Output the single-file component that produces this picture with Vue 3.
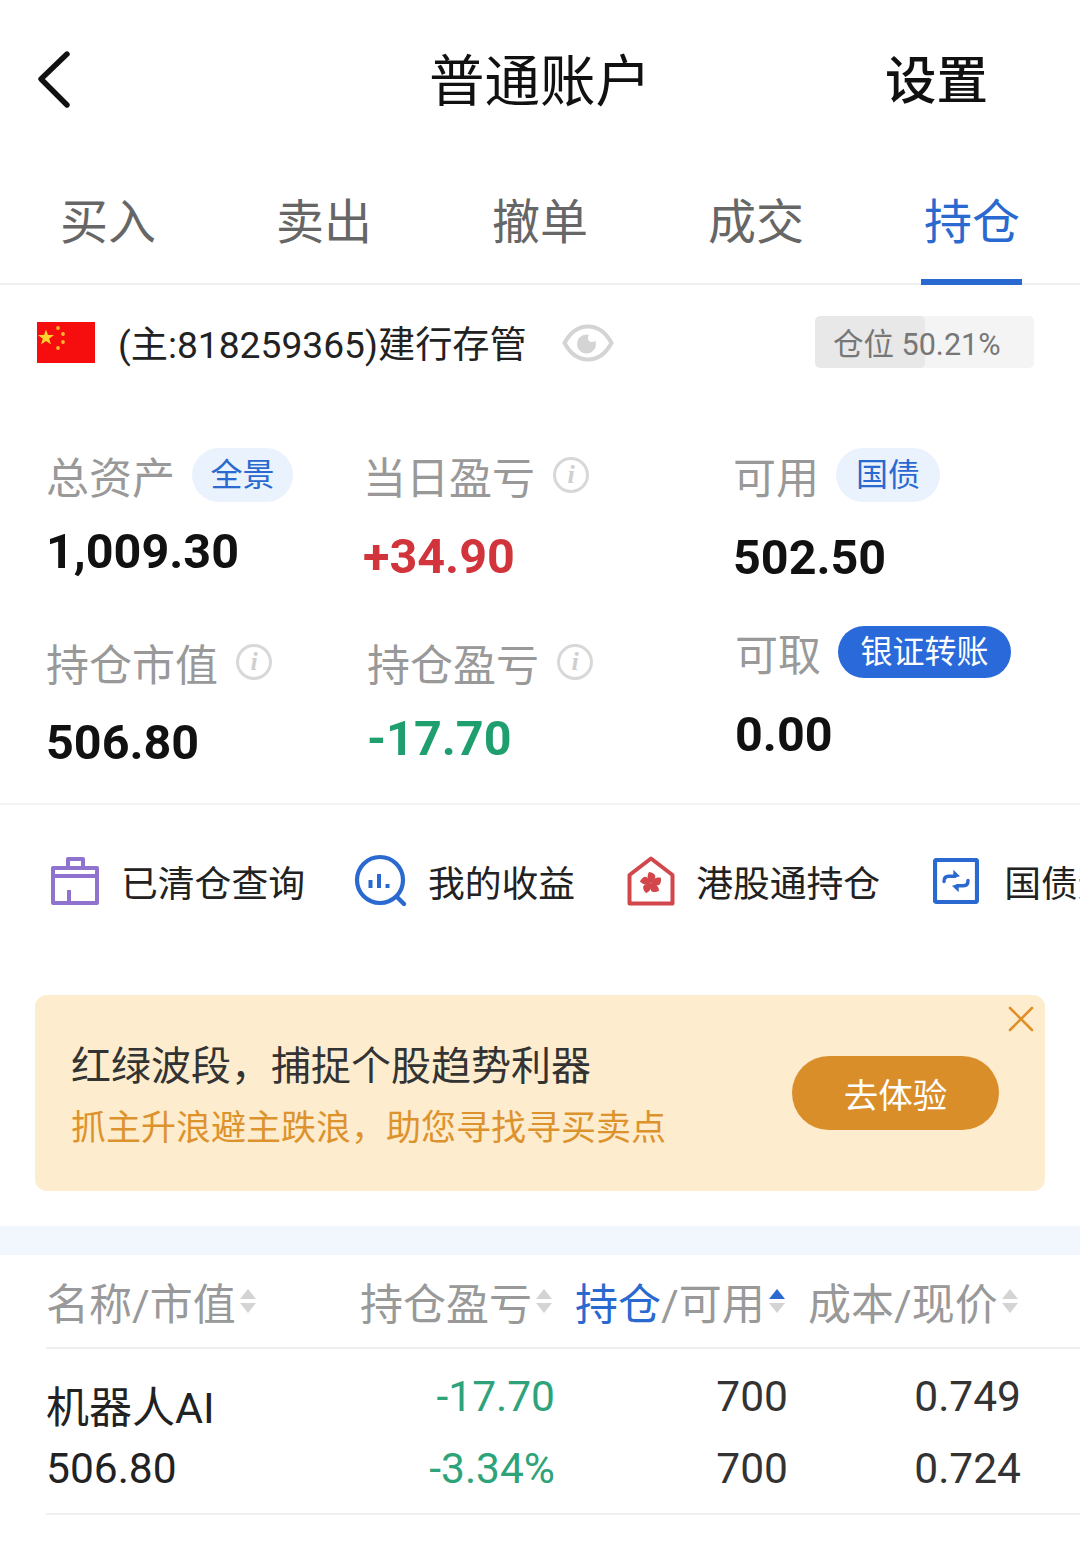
<script setup>
const tabs = ['买入', '卖出', '撤单', '成交', '持仓']

const columns = [
  { key: 'name', label: '名称/市值' },
  { key: 'profit', label: '持仓盈亏' },
  { key: 'hold', active: '持仓', label: '/可用', sorted: true },
  { key: 'cost', label: '成本/现价' }
]

const petal = 'M24 27 C20.5 24.5 19.5 20 22 16 C26 16.5 29.5 19 28 22 C27 24 25.5 25 24 27 Z'
</script>

<template>
  <div class="page">
    <header class="topbar">
      <svg class="back" width="36" height="60" viewBox="0 0 36 60">
        <path d="M31 4 L5 29 L31 55" fill="none" stroke="#111" stroke-width="5.4" stroke-linecap="round" stroke-linejoin="round" />
      </svg>
      <h1 class="title">普通账户</h1>
      <span class="setting">设置</span>
    </header>

    <nav class="tabs">
      <div v-for="(tab, i) in tabs" :key="tab" class="tab" :class="{ active: i === 4 }">{{ tab }}</div>
    </nav>

    <section class="account">
      <svg class="flag" width="58" height="41" viewBox="0 0 58 41">
        <rect width="58" height="41" fill="#f60d0d" />
        <polygon points="9,7.5 11,13 17,13 12.2,16.8 14,22.5 9,19 4,22.5 5.8,16.8 1,13 7,13" fill="#fbd22e" />
        <circle cx="21" cy="6" r="1.9" fill="#f9b62a" />
        <circle cx="26" cy="12" r="1.9" fill="#f9b62a" />
        <circle cx="26" cy="20" r="1.9" fill="#f9b62a" />
        <circle cx="21" cy="26" r="1.9" fill="#f9b62a" />
      </svg>
      <span class="account-name">(主:818259365)建行存管</span>
      <svg class="eye" width="52" height="38" viewBox="0 0 52 38">
        <path d="M2.5 19 C9 7 17 2.5 26 2.5 C35 2.5 43 7 49.5 19 C43 31 35 35.5 26 35.5 C17 35.5 9 31 2.5 19 Z" fill="none" stroke="#d4d4d4" stroke-width="4" />
        <circle cx="24.5" cy="20" r="9.5" fill="#d4d4d4" />
        <circle cx="30" cy="14" r="4" fill="#fff" />
      </svg>
      <div class="position">
        <div class="position-fill"></div>
        <span class="position-text">仓位 50.21%</span>
      </div>
    </section>

    <section class="stats">
      <div class="stat s-assets">
        <div class="stat-label">总资产<span class="pill">全景</span></div>
        <div class="stat-value">1,009.30</div>
      </div>
      <div class="stat s-today">
        <div class="stat-label">当日盈亏<i class="info">i</i></div>
        <div class="stat-value up">+34.90</div>
      </div>
      <div class="stat s-avail">
        <div class="stat-label">可用<span class="pill">国债</span></div>
        <div class="stat-value">502.50</div>
      </div>
      <div class="stat s-market">
        <div class="stat-label">持仓市值<i class="info">i</i></div>
        <div class="stat-value">506.80</div>
      </div>
      <div class="stat s-hold">
        <div class="stat-label">持仓盈亏<i class="info">i</i></div>
        <div class="stat-value down">-17.70</div>
      </div>
      <div class="stat s-draw">
        <div class="stat-label">可取<span class="pill solid">银证转账</span></div>
        <div class="stat-value">0.00</div>
      </div>
    </section>

    <section class="actions">
      <div class="action a-clear">
        <svg width="50" height="50" viewBox="0 0 50 50" fill="none" stroke="#9072cf" stroke-width="4" stroke-linejoin="round">
          <path d="M3 12 H47 V47 H3 Z" />
          <path d="M18 12 V3 H33 V12" />
          <path d="M3 20 H47" />
          <path d="M19 34 V47" />
        </svg>
        <span>已清仓查询</span>
      </div>
      <div class="action a-income">
        <svg width="54" height="54" viewBox="0 0 54 54" fill="none">
          <circle cx="26" cy="26" r="23" stroke="#2a69cf" stroke-width="4.2" />
          <path d="M43 43 L50 50" stroke="#2a69cf" stroke-width="4.4" stroke-linecap="round" />
          <path d="M16.5 26 V34 M25 20 V34 M33.5 30 V34" stroke="#2a69cf" stroke-width="4" />
        </svg>
        <span>我的收益</span>
      </div>
      <div class="action a-hk">
        <svg width="48" height="50" viewBox="0 0 48 50" fill="none">
          <path d="M2.5 19 L24 2.5 L45.5 19 V47.5 H2.5 Z" stroke="#d2474c" stroke-width="4" stroke-linejoin="round" />
          <g fill="#d2474c">
            <path :d="petal" />
            <path :d="petal" transform="rotate(72 24 27)" />
            <path :d="petal" transform="rotate(144 24 27)" />
            <path :d="petal" transform="rotate(216 24 27)" />
            <path :d="petal" transform="rotate(288 24 27)" />
          </g>
        </svg>
        <span>港股通持仓</span>
      </div>
      <div class="action a-bond">
        <svg width="46" height="46" viewBox="0 0 46 46" fill="none" stroke="#2a69cf">
          <rect x="2" y="2" width="42" height="42" rx="1.5" stroke-width="4.2" />
          <path d="M11 23.5 C11 20 13 18.3 15.5 18.3 H22" stroke-width="3.4" stroke-linecap="round" />
          <path d="M35 22.5 C35 26 33 27.7 30.5 27.7 H24" stroke-width="3.4" stroke-linecap="round" />
          <path d="M20.3 11.7 L27 18.3 L20.3 20 Z" fill="#2a69cf" stroke="none" />
          <path d="M25.7 34.3 L19 27.7 L25.7 26 Z" fill="#2a69cf" stroke="none" />
        </svg>
        <span>国债逆回购</span>
      </div>
    </section>

    <section class="banner">
      <div class="banner-text">
        <div class="banner-title">红绿波段，捕捉个股趋势利器</div>
        <div class="banner-sub">抓主升浪避主跌浪，助您寻找寻买卖点</div>
      </div>
      <button class="banner-btn">去体验</button>
      <svg class="banner-close" width="26" height="26" viewBox="0 0 26 26">
        <path d="M2 2 L24 24 M24 2 L2 24" stroke="#df9029" stroke-width="2.6" stroke-linecap="round" />
      </svg>
    </section>

    <div class="divider"></div>

    <section class="table">
      <div class="thead">
        <div v-for="col in columns" :key="col.key" class="th" :class="'col-' + col.key">
          <span v-if="col.active" class="th-active">{{ col.active }}</span>{{ col.label }}
          <span class="sort">
            <em class="tri-up" :class="{ on: col.sorted }"></em>
            <em class="tri-down"></em>
          </span>
        </div>
      </div>
      <div class="tr">
        <div class="td-name">
          <div class="stock-name">机器人AI</div>
          <div class="stock-value">506.80</div>
        </div>
        <div class="td td-profit">
          <div>-17.70</div>
          <div>-3.34%</div>
        </div>
        <div class="td td-hold">
          <div>700</div>
          <div>700</div>
        </div>
        <div class="td td-cost">
          <div>0.749</div>
          <div>0.724</div>
        </div>
      </div>
    </section>
  </div>
</template>

<style scoped>
.page {
  width: 1080px;
  height: 1566px;
  overflow: hidden;
  background: #fff;
  color: #111;
  font-family: Roboto, "Noto Sans CJK SC", sans-serif;
}

/* top bar */
.topbar {
  height: 160px;
  display: flex;
  align-items: center;
  position: relative;
}

.back {
  margin-left: 36px;
}

.title {
  position: absolute;
  left: 0;
  right: 0;
  top: 52px;
  margin: 0;
  text-align: center;
  font-size: 55.5px;
  line-height: 62px;
  font-weight: 400;
}

.setting {
  margin-left: auto;
  margin-right: 92px;
  margin-top: 4px;
  font-size: 51.5px;
  line-height: 60px;
  font-weight: 500;
}

/* tabs */
.tabs {
  height: 125px;
  display: grid;
  grid-template-columns: repeat(5, 1fr);
  border-bottom: 2px solid #eef0f2;
  box-sizing: border-box;
}

.tab {
  position: relative;
  text-align: center;
  font-size: 48px;
  line-height: 126px;
  color: #666;
}

.tab.active {
  color: #2a69cf;
}

.tab.active::after {
  content: '';
  position: absolute;
  left: 57px;
  right: 58px;
  bottom: 1px;
  height: 6px;
  background: #2a69cf;
}

/* account row */
.account {
  height: 118px;
  padding: 0 46px 0 37px;
  display: flex;
  align-items: center;
}

.flag {
  margin-bottom: 3px;
}

.account-name {
  margin-left: 23px;
  margin-top: 2px;
  font-size: 37.2px;
  line-height: 50px;
  color: #222;
}

.eye {
  margin-left: 35px;
  margin-bottom: 2px;
}

.position {
  position: relative;
  margin-left: auto;
  margin-bottom: 4px;
  width: 219px;
  height: 52px;
  border-radius: 5px;
  background: #f4f4f4;
  overflow: hidden;
}

.position-fill {
  position: absolute;
  left: 0;
  top: 0;
  bottom: 0;
  width: 110px;
  border-radius: 5px;
  background: #e8e8e8;
}

.position-text {
  position: absolute;
  left: 18px;
  top: 7px;
  font-size: 30.5px;
  line-height: 44px;
  color: #777;
  white-space: nowrap;
}

/* stats */
.stats {
  height: 402px;
  padding-left: 46px;
  display: grid;
  grid-template-columns: 317px 370px 1fr;
  grid-template-rows: 187px 1fr;
  border-bottom: 2px solid #f3f4f5;
  box-sizing: border-box;
}

.stat-label {
  display: flex;
  align-items: center;
  height: 60px;
  font-size: 43px;
  color: #999;
}

.stat-value {
  font-size: 48.5px;
  line-height: 60px;
  font-weight: 700;
  color: #111;
}

.stat-value.up {
  color: #d2343c;
}

.stat-value.down {
  color: #1f9e6e;
}

.s-assets,
.s-today,
.s-avail {
  padding-top: 42px;
}

.s-assets .stat-value {
  margin-top: 17px;
}

.s-today .stat-value {
  margin-top: 22px;
}

.s-avail .stat-value {
  margin-top: 23px;
}

.s-market,
.s-hold {
  padding-top: 42px;
}

.s-market .stat-value {
  margin-top: 21px;
}

.s-hold {
  margin-left: 4px;
}

.s-hold .stat-value {
  margin-top: 17px;
}

.s-draw {
  margin-left: 2px;
  padding-top: 32px;
}

.s-draw .stat-value {
  margin-top: 23px;
}

.pill {
  margin-left: 17px;
  height: 54px;
  padding: 0 18.5px;
  border-radius: 27px;
  background: #eaf2fd;
  color: #2a69cf;
  font-size: 32px;
  line-height: 54px;
}

.s-avail .pill {
  padding: 0 20px;
}

.pill.solid {
  height: 52px;
  line-height: 52px;
  padding: 0 22.5px;
  background: #2a69d9;
  color: #fff;
}

.info {
  margin-left: 18px;
  width: 30px;
  height: 30px;
  border: 3px solid #d8d8d8;
  border-radius: 50%;
  display: flex;
  align-items: center;
  justify-content: center;
  font-family: "Liberation Serif", serif;
  font-size: 26px;
  font-weight: 700;
  font-style: italic;
  color: #cfcfcf;
}

/* shortcut row */
.actions {
  height: 190px;
  padding-bottom: 38px;
  box-sizing: border-box;
  display: flex;
  align-items: center;
  overflow: hidden;
  white-space: nowrap;
  font-size: 36.8px;
  color: #222;
}

.action {
  display: flex;
  align-items: center;
  flex: none;
}

.action svg {
  flex: none;
}

.a-clear {
  margin-left: 50px;
  gap: 21px;
}

.a-income {
  margin-left: 49px;
  gap: 20px;
}

.a-hk {
  margin-left: 52px;
  gap: 21px;
}

.a-bond {
  margin-left: 53px;
  gap: 25px;
}

/* promo banner */
.banner {
  position: relative;
  margin: 0 35px;
  height: 196px;
  padding: 0 46px 0 36px;
  border-radius: 12px;
  background: #fdeccd;
  display: flex;
  align-items: center;
  justify-content: space-between;
}

.banner-text {
  padding-top: 6px;
}

.banner-title {
  font-size: 40px;
  line-height: 56px;
  color: #333;
}

.banner-sub {
  margin-top: 9px;
  font-size: 35px;
  line-height: 50px;
  color: #dd932d;
}

.banner-btn {
  width: 207px;
  height: 74px;
  margin-bottom: 1px;
  border: none;
  border-radius: 37px;
  background: #da8e2a;
  color: #fff;
  font-family: inherit;
  font-size: 34.5px;
}

.banner-close {
  position: absolute;
  right: 11px;
  top: 11px;
}

.divider {
  height: 29px;
  margin-top: 35px;
  background: #f2f6fd;
}

/* holdings table */
.table {
  padding-left: 46px;
}

.thead {
  height: 94px;
  display: flex;
  align-items: center;
  border-bottom: 2px solid #eeeeee;
  box-sizing: border-box;
  font-size: 43px;
  color: #999;
  white-space: nowrap;
}

.th {
  display: flex;
  align-items: center;
  flex: none;
}

.col-name {
  width: 314px;
}

.col-profit {
  width: 215px;
}

.col-hold {
  width: 233px;
}

.th-active {
  color: #2a69cf;
}

.sort {
  margin-left: 4px;
  display: flex;
  flex-direction: column;
  gap: 4px;
}

.sort em {
  display: block;
  width: 0;
  height: 0;
  border-left: 8px solid transparent;
  border-right: 8px solid transparent;
}

.tri-up {
  border-bottom: 10px solid #d4d4d4;
}

.tri-up.on {
  border-bottom-color: #2a69cf;
}

.tri-down {
  border-top: 10px solid #d4d4d4;
}

.tr {
  height: 166px;
  display: flex;
  border-bottom: 2px solid #f0f0f0;
  box-sizing: border-box;
  font-size: 42.5px;
  color: #333;
}

.td-name {
  width: 302px;
  padding-top: 28px;
}

.stock-name {
  font-size: 43px;
  line-height: 62px;
  color: #222;
}

.stock-value {
  line-height: 60px;
  color: #222;
}

.td {
  padding-top: 12px;
  text-align: right;
  line-height: 72px;
}

.td-profit {
  width: 207px;
  color: #2ea37a;
}

.td-hold {
  width: 233px;
}

.td-cost {
  width: 233px;
}
</style>

<style>
html,
body {
  margin: 0;
  background: #fff;
}
</style>
